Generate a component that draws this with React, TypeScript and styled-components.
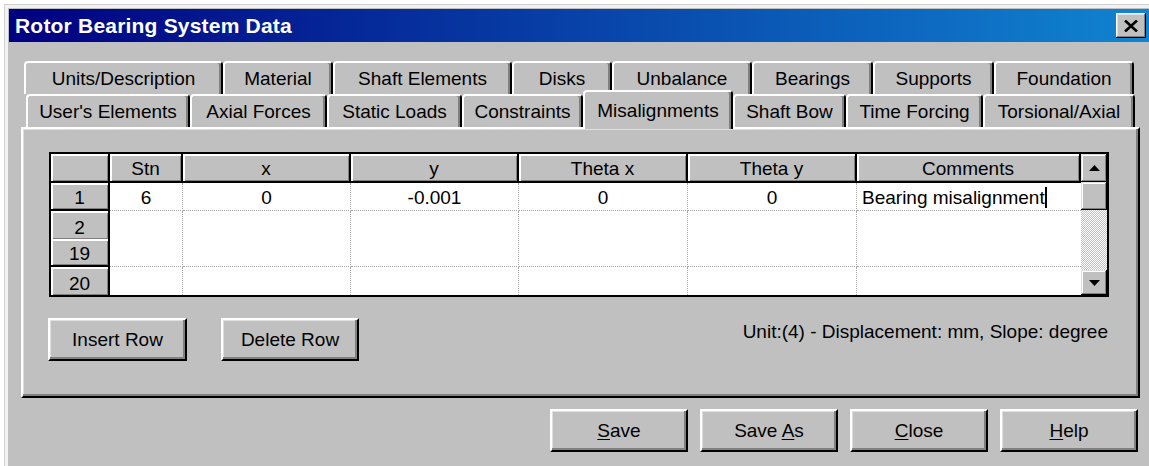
import styled, { createGlobalStyle } from "styled-components";

const GlobalStyle = createGlobalStyle`
  html, body {
    margin: 0;
    padding: 0;
    background: #fff;
    overflow: hidden;
  }
  body {
    font-family: "Liberation Sans", Arial, sans-serif;
    color: #000;
  }
  * {
    box-sizing: border-box;
  }
`;

const Frame = styled.div`
  margin: 4px 0 0 4px;
  width: 1145px;
  height: 462px;
  border-top: 1px solid #cfcfcf;
  border-left: 1px solid #cfcfcf;
  padding: 3px 0 0 3px;
  background: #f2f2f2;
  overflow: hidden;
`;

const Dialog = styled.div`
  width: 1141px;
  height: 458px;
  background: #c0c0c0;
  display: flex;
  flex-direction: column;
`;

const TitleBar = styled.div`
  margin: 1px 0 0 1px;
  height: 33px;
  background: linear-gradient(90deg, #000080 0%, #1084d0 100%);
  display: flex;
  align-items: center;
  justify-content: space-between;
  padding: 0 3px 0 6px;
`;

const TitleText = styled.span`
  color: #fff;
  font-weight: bold;
  font-size: 21px;
  letter-spacing: 0.2px;
`;

const CloseButton = styled.div`
  width: 30px;
  height: 25px;
  background: #c0c0c0;
  display: flex;
  align-items: center;
  justify-content: center;
  box-shadow: inset -1px -1px #000, inset 1px 1px #fff, inset -2px -2px #808080,
    inset 2px 2px #dfdfdf;
`;

const Content = styled.div`
  padding: 19px 0 0 13px;
`;

const TabRow = styled.div<{ $indent: number }>`
  display: flex;
  align-items: flex-end;
  height: 33px;
  padding-left: ${(p) => p.$indent}px;
  position: relative;
`;

const Tab = styled.div<{ $w: number; $active?: boolean }>`
  position: relative;
  z-index: ${(p) => (p.$active ? 3 : 0)};
  width: ${(p) => p.$w}px;
  height: ${(p) => (p.$active ? 39 : 33)}px;
  margin-bottom: ${(p) => (p.$active ? -2 : 0)}px;
  background: #c0c0c0;
  border-top: 2px solid #fff;
  border-left: 2px solid #fff;
  border-right: 2px solid #000;
  border-radius: 4px 4px 0 0;
  box-shadow: inset -2px 0 0 #808080;
  display: flex;
  align-items: center;
  justify-content: center;
  padding-top: ${(p) => (p.$active ? 0 : 1)}px;
  font-size: 19px;
  white-space: nowrap;
`;

const Panel = styled.div`
  position: relative;
  z-index: 1;
  width: 1119px;
  height: 271px;
  border-top: 2px solid #fff;
  border-left: 2px solid #fff;
  border-right: 2px solid #000;
  border-bottom: 2px solid #000;
  box-shadow: inset -2px -2px #808080, inset 1px 1px #dfdfdf;
  padding: 23px 0 0 26px;
`;

const GridBox = styled.div`
  width: 1060px;
  height: 145px;
  border: 2px solid #000;
  display: flex;
  background: #fff;
`;

const Table = styled.div`
  display: grid;
  grid-template-columns: 59px 73px 168px 168px 169px 169px 224px;
  grid-template-rows: 29px 28px 28px 28px 28px;
  font-size: 19px;
`;

const HeadCell = styled.div`
  background: #c0c0c0;
  border-right: 2px solid #000;
  border-bottom: 2px solid #000;
  box-shadow: inset 2px 2px #fff, inset -1px -1px #808080;
  display: flex;
  align-items: center;
  justify-content: center;
  padding-top: 3px;
`;

const RowHead = styled.div<{ $sep: boolean }>`
  background: #c0c0c0;
  border-right: 2px solid #000;
  border-bottom: ${(p) => (p.$sep ? "2px solid #000" : "none")};
  box-shadow: inset 2px 2px #fff, inset -1px -1px #808080;
  display: flex;
  align-items: center;
  justify-content: center;
  padding-top: ${(p) => (p.$sep ? 3 : 6)}px;
`;

const Cell = styled.div<{ $span?: boolean; $left?: boolean; $last?: boolean; $bottom?: boolean }>`
  grid-row: ${(p) => (p.$span ? "span 2" : "auto")};
  background: #fff;
  border-right: ${(p) => (p.$last ? "none" : "1px dotted #a8a8a8")};
  border-bottom: ${(p) => (p.$bottom ? "none" : "1px dotted #a8a8a8")};
  display: flex;
  align-items: center;
  justify-content: ${(p) => (p.$left ? "flex-start" : "center")};
  padding: 2px 0 0 ${(p) => (p.$left ? 5 : 0)}px;
  white-space: nowrap;
`;

const Caret = styled.span`
  display: inline-block;
  width: 2px;
  height: 21px;
  background: #000;
`;

const ScrollBar = styled.div`
  width: 26px;
  display: flex;
  flex-direction: column;
`;

const ScrollBtn = styled.div<{ $h: number }>`
  height: ${(p) => p.$h}px;
  background: #c0c0c0;
  box-shadow: inset -1px -1px #000, inset 1px 1px #dfdfdf, inset -2px -2px #808080,
    inset 2px 2px #fff;
  display: flex;
  align-items: center;
  justify-content: center;
`;

const ScrollTrack = styled.div`
  flex: 1;
  background-color: #c0c0c0;
  background-image: repeating-conic-gradient(#fff 0 25%, #c0c0c0 0 50%);
  background-size: 2px 2px;
`;

const Controls = styled.div`
  display: flex;
  align-items: flex-start;
  width: 1060px;
  margin-top: 21px;
`;

const Button = styled.div<{ $w: number }>`
  width: ${(p) => p.$w}px;
  height: 43px;
  background: #c0c0c0;
  border-top: 2px solid #fff;
  border-left: 2px solid #fff;
  border-right: 2px solid #000;
  border-bottom: 2px solid #000;
  box-shadow: inset -2px -2px #808080, inset 1px 1px #dfdfdf;
  display: flex;
  align-items: center;
  justify-content: center;
  font-size: 19px;
  white-space: nowrap;

  & u {
    text-underline-offset: 2px;
  }
`;

const InsertButton = styled(Button)`
  margin-left: -1px;
`;

const DeleteButton = styled(Button)`
  margin-left: 34px;
`;

const UnitNote = styled.span`
  margin: 3px 1px 0 auto;
  font-size: 19px;
  line-height: 22px;
`;

const Footer = styled.div`
  width: 1117px;
  margin-top: 11px;
  display: flex;
  justify-content: flex-end;
  gap: 12px;
`;

const backTabs: [string, number][] = [
  ["Units/Description", 199],
  ["Material", 110],
  ["Shaft Elements", 179],
  ["Disks", 100],
  ["Unbalance", 140],
  ["Bearings", 121],
  ["Supports", 121],
  ["Foundation", 140],
];

const frontTabs: [string, number][] = [
  ["User's Elements", 164],
  ["Axial Forces", 137],
  ["Static Loads", 135],
  ["Constraints", 121],
  ["Misalignments", 150],
  ["Shaft Bow", 113],
  ["Time Forcing", 137],
  ["Torsional/Axial", 152],
];

const columns = ["Stn", "x", "y", "Theta x", "Theta y", "Comments"];
const firstRow = ["6", "0", "-0.001", "0", "0", "Bearing misalignment"];

const Arrow = ({ down }: { down?: boolean }) => (
  <svg width="11" height="6" viewBox="0 0 11 6">
    <polygon points={down ? "0,0 11,0 5.5,6" : "0,6 11,6 5.5,0"} fill="#000" />
  </svg>
);

const CloseGlyph = () => (
  <svg width="14" height="12" viewBox="0 0 14 12">
    <path d="M1 0.5 L13 11.5 M13 0.5 L1 11.5" stroke="#000" strokeWidth="2.6" />
  </svg>
);

export default function App() {
  return (
    <>
      <GlobalStyle />
      <Frame>
        <Dialog>
          <TitleBar>
            <TitleText>Rotor Bearing System Data</TitleText>
            <CloseButton>
              <CloseGlyph />
            </CloseButton>
          </TitleBar>
          <Content>
            <TabRow $indent={3}>
              {backTabs.map(([label, w]) => (
                <Tab key={label} $w={w}>
                  {label}
                </Tab>
              ))}
            </TabRow>
            <TabRow $indent={5}>
              {frontTabs.map(([label, w]) => (
                <Tab key={label} $w={w} $active={label === "Misalignments"}>
                  {label}
                </Tab>
              ))}
            </TabRow>
            <Panel>
              <GridBox>
                <Table>
                  <HeadCell />
                  {columns.map((c) => (
                    <HeadCell key={c}>{c}</HeadCell>
                  ))}

                  <RowHead $sep>1</RowHead>
                  {firstRow.map((v, i) => (
                    <Cell key={i} $left={i === 5} $last={i === 5}>
                      {v}
                      {i === 5 && <Caret />}
                    </Cell>
                  ))}

                  <RowHead $sep={false}>2</RowHead>
                  {columns.map((c, i) => (
                    <Cell key={c} $span $last={i === 5} />
                  ))}
                  <RowHead $sep>19</RowHead>

                  <RowHead $sep={false}>20</RowHead>
                  {columns.map((c, i) => (
                    <Cell key={c} $last={i === 5} $bottom />
                  ))}
                </Table>
                <ScrollBar>
                  <ScrollBtn $h={28}>
                    <Arrow />
                  </ScrollBtn>
                  <ScrollBtn $h={28} />
                  <ScrollTrack />
                  <ScrollBtn $h={25}>
                    <Arrow down />
                  </ScrollBtn>
                </ScrollBar>
              </GridBox>
              <Controls>
                <InsertButton $w={139}>Insert Row</InsertButton>
                <DeleteButton $w={138}>Delete Row</DeleteButton>
                <UnitNote>Unit:(4) - Displacement: mm, Slope: degree</UnitNote>
              </Controls>
            </Panel>
            <Footer>
              <Button $w={138}>
                <span>
                  <u>S</u>ave
                </span>
              </Button>
              <Button $w={138}>
                <span>
                  Save <u>A</u>s
                </span>
              </Button>
              <Button $w={138}>
                <span>
                  <u>C</u>lose
                </span>
              </Button>
              <Button $w={138}>
                <span>
                  <u>H</u>elp
                </span>
              </Button>
            </Footer>
          </Content>
        </Dialog>
      </Frame>
    </>
  );
}
